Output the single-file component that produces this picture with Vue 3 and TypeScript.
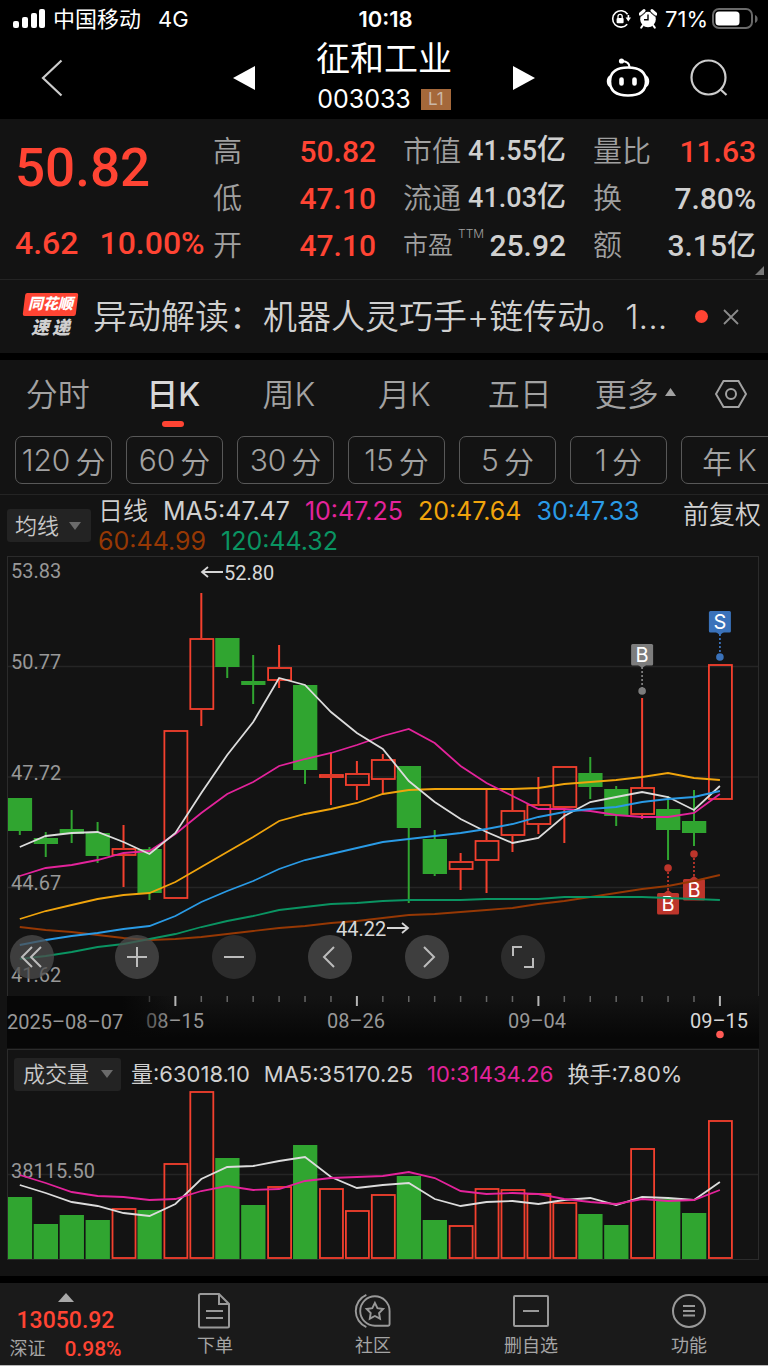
<script setup lang="ts">
import { ref } from 'vue'

type Dir = 'up' | 'down'
type Candle = [Dir, number, number, number, number]

const FIRST_X = 19.8
const STEP = 25.93
const HALF = 12
const cx = (i: number): number => FIRST_X + STEP * i
const line = (ys: number[]): string => ys.map((y, i) => `${cx(i).toFixed(1)},${y}`).join(' ')

// direction, body top, body bottom, high, low
const candles: Candle[] = [
  ['down', 798, 831, 798, 835], ['down', 838, 844, 832, 857], ['down', 829, 834, 810, 843],
  ['down', 833, 856, 822, 863], ['up', 848, 856, 825, 887], ['down', 849, 893, 847, 900],
  ['up', 730, 899, 730, 899], ['up', 638, 710, 593, 726], ['down', 638, 667, 638, 678],
  ['down', 681, 685, 655, 704], ['up', 667, 681, 645, 688], ['down', 685, 770, 685, 784],
  ['up', 774, 778, 753, 805], ['up', 773, 786, 761, 800], ['up', 759, 780, 754, 794],
  ['down', 766, 828, 766, 903], ['down', 839, 874, 830, 876], ['up', 861, 870, 853, 890],
  ['up', 840, 861, 788, 893], ['up', 810, 836, 789, 852], ['up', 804, 825, 777, 834],
  ['up', 766, 808, 766, 843], ['down', 773, 787, 757, 799], ['down', 789, 816, 786, 826],
  ['up', 787, 815, 698, 819], ['down', 809, 830, 796, 860], ['down', 821, 833, 790, 846],
  ['up', 664, 800, 664, 800],
]

const averages: { color: string; ys: number[] }[] = [
  { color: '#963804', ys: [927, 930, 932, 935, 938, 940, 939, 937, 934, 931, 928, 926, 923, 921, 918, 915, 914, 912, 910, 908, 904, 901, 897, 893, 889, 886, 881, 875] },
  { color: '#0a9462', ys: [959, 956, 952, 947, 944, 939, 934, 927, 921, 916, 910, 907, 904, 903, 901, 900, 900, 900, 899, 899, 899, 897, 897, 897, 897, 898, 899, 900] },
  { color: '#f0a40c', ys: [919, 911, 905, 899, 895, 893, 882, 867, 852, 837, 821, 814, 809, 803, 794, 790, 789, 789, 789, 789, 788, 784, 782, 780, 777, 773, 778, 780] },
  { color: '#e3239b', ys: [876, 868, 865, 860, 853, 851, 834, 813, 794, 782, 766, 759, 753, 745, 736, 729, 743, 766, 783, 796, 809, 809, 811, 815, 817, 817, 813, 794] },
  { color: '#dcdcdc', ys: [847, 836, 833, 832, 842, 854, 833, 793, 755, 722, 678, 685, 712, 733, 749, 781, 802, 819, 832, 843, 838, 816, 802, 797, 792, 797, 810, 786] },
  { color: '#2a9be6', ys: [945, 940, 936, 933, 929, 926, 916, 902, 891, 881, 869, 860, 854, 848, 842, 839, 836, 833, 829, 824, 817, 812, 809, 807, 802, 799, 797, 791] },
]

const volumes: [Dir, number][] = [
  ['down', 1197], ['down', 1224], ['down', 1215], ['down', 1220], ['up', 1208], ['down', 1210], ['up', 1163],
  ['up', 1091], ['down', 1158], ['down', 1205], ['up', 1186], ['down', 1145], ['up', 1188], ['up', 1210],
  ['up', 1194], ['down', 1176], ['down', 1220], ['up', 1225], ['up', 1188], ['up', 1189], ['up', 1193],
  ['up', 1202], ['down', 1214], ['down', 1225], ['up', 1148], ['down', 1199], ['down', 1213], ['up', 1120],
]
const volumeMa5 = [1185, 1193, 1202, 1206, 1213, 1216, 1204, 1179, 1167, 1166, 1161, 1157, 1177, 1188, 1185, 1183, 1199, 1206, 1202, 1201, 1204, 1200, 1198, 1205, 1197, 1198, 1200, 1182]
const volumeMa10 = [1175, 1183, 1192, 1196, 1197, 1200, 1199, 1191, 1186, 1190, 1189, 1181, 1178, 1177, 1176, 1172, 1178, 1191, 1194, 1193, 1194, 1199, 1202, 1204, 1199, 1201, 1200, 1190]

const ticks = Array.from({ length: 23 }, (_, k) => ({ x: cx(k + 5), major: (k - 1) % 7 === 0 }))

const markers = [
  { i: 24, label: 'B', top: 644, dot: 691, below: false, color: '#7d7d7d' },
  { i: 27, label: 'S', top: 611, dot: 657, below: false, color: '#3a72ba' },
  { i: 25, label: 'B', top: 893, dot: 868, below: true, color: '#bd352b' },
  { i: 26, label: 'B', top: 879, dot: 854, below: true, color: '#bd352b' },
]

const tabs = ['分时', '日K', '周K', '月K', '五日']
const activeTab = ref('日K')
const periods = [['120', '分'], ['60', '分'], ['30', '分'], ['15', '分'], ['5', '分'], ['1', '分'], ['年', 'K']]
</script>

<template>
  <main class="app">
    <header class="top">
      <div class="status">
        <div class="status-left">
          <svg width="32" height="20" viewBox="0 0 32 20" fill="#fff" aria-hidden="true">
            <rect x="0" y="12" width="6" height="7" rx="2" /><rect x="9" y="8" width="6" height="11" rx="2" />
            <rect x="18" y="4" width="6" height="15" rx="2" /><rect x="26" y="0" width="6" height="19" rx="2" />
          </svg>
          <span class="carrier">中国移动</span><span class="net">4G</span>
        </div>
        <strong class="clock">10:18</strong>
        <div class="status-right">
          <svg width="20" height="20" viewBox="0 0 20 20" fill="none" stroke="#fff" stroke-width="1.6" aria-hidden="true">
            <path d="M16.6 5.2A8.2 8.2 0 1 0 16.2 15.2" /><path d="M17.4 6v4" />
            <path d="M14.6 8.6h5.4l-2.7 4z" fill="#fff" stroke="none" />
            <rect x="5.6" y="9" width="7" height="5.2" rx="1" fill="#fff" stroke="none" />
            <path d="M7 9.2V7.4a2.1 2.1 0 0 1 4.2 0v1.8" stroke-width="1.3" />
          </svg>
          <svg width="18" height="20" viewBox="0 0 18 20" aria-hidden="true">
            <circle cx="9" cy="10.5" r="7.8" fill="#fff" />
            <path d="M1 5.2 5 1.6M17 5.2 13 1.6" stroke="#fff" stroke-width="3" stroke-linecap="round" />
            <path d="M2.2 7 6.6 3.2M15.8 7 11.4 3.2" stroke="#000" stroke-width="1" />
            <path d="M3.8 16.4 2.2 18.6M14.2 16.4l1.6 2.2" stroke="#fff" stroke-width="2" stroke-linecap="round" />
            <path d="M9 5.6v5.2H5" fill="none" stroke="#000" stroke-width="1.4" />
          </svg>
          <span>71%</span>
          <svg width="46" height="22" viewBox="0 0 46 22" aria-hidden="true">
            <rect x="1" y="1" width="39" height="19" rx="6" fill="none" stroke="#6a6a6a" stroke-width="2" />
            <rect x="3.5" y="3.5" width="24" height="14" rx="3.5" fill="#fff" />
            <path d="M43 7v8c2-.8 2.600-2.400 2.600-4S45 7.800 43 7z" fill="#6a6a6a" />
          </svg>
        </div>
      </div>
      <div class="nav">
        <button class="back" aria-label="返回">
          <svg width="22" height="38" viewBox="0 0 22 38" fill="none" stroke="#ccc" stroke-width="2.200"><path d="M20.500 1.500 2 19l18.500 17.500" /></svg>
        </button>
        <button aria-label="上一只"><svg width="22" height="24" viewBox="0 0 22 24"><path d="M22 0v24L0 12z" fill="#fff" /></svg></button>
        <div class="title">
          <h1>征和工业</h1>
          <div class="code"><span>003033</span><span class="level">L1</span></div>
        </div>
        <button aria-label="下一只"><svg width="22" height="24" viewBox="0 0 22 24"><path d="M0 0v24l22-12z" fill="#fff" /></svg></button>
        <div class="actions">
          <button aria-label="智能助手">
            <svg width="44" height="40" viewBox="0 0 44 40" fill="none" stroke="#fff" stroke-width="2.600">
              <path d="M22 9.500c10 0 18 3.500 18 14s-8 14-18 14-18-3.500-18-14 8-14 18-14z" />
              <path d="M23.500 9c0-4-3-5.500-7.500-6" stroke-width="2.200" /><circle cx="15.500" cy="3" r="2.600" fill="#fff" stroke="none" />
              <path d="M4.500 17c-5 1.500-5 11 0 12.500zM39.500 17c5 1.500 5 11 0 12.500z" fill="#fff" stroke="none" />
              <path d="M15.500 21.500v4M28.500 21.500v4" stroke-width="4.600" stroke-linecap="round" />
            </svg>
          </button>
          <button aria-label="搜索">
            <svg width="38" height="38" viewBox="0 0 38 38" fill="none" stroke="#ccc" stroke-width="2.200"><circle cx="18.500" cy="18.500" r="17" /><path d="m30 30 6.500 6" /></svg>
          </button>
        </div>
      </div>
    </header>

    <section class="quote">
      <div class="price">
        <strong>50.82</strong>
        <div class="change"><span>4.62</span><span>10.00%</span></div>
      </div>
      <dl>
        <div><dt>高</dt><dd class="red">50.82</dd></div>
        <div><dt>低</dt><dd class="red">47.10</dd></div>
        <div><dt>开</dt><dd class="red">47.10</dd></div>
      </dl>
      <dl>
        <div><dt>市值</dt><dd class="compact">41.55<i>亿</i></dd></div>
        <div><dt>流通</dt><dd class="compact">41.03<i>亿</i></dd></div>
        <div><dt class="small">市盈<sup>TTM</sup></dt><dd>25.92</dd></div>
      </dl>
      <dl>
        <div><dt>量比</dt><dd class="red">11.63</dd></div>
        <div><dt>换</dt><dd>7.80%</dd></div>
        <div><dt>额</dt><dd>3.15<i>亿</i></dd></div>
      </dl>
      <svg class="corner" width="9" height="9" viewBox="0 0 9 9" aria-hidden="true"><path d="M9 0v9H0z" fill="#777" /></svg>
    </section>

    <section class="news">
      <div class="brand">
        <span class="brand-top">同花顺</span>
        <span class="brand-bottom"><span>速</span><span>递</span></span>
      </div>
      <a href="#news">异动解读：机器人灵巧手+链传动。1...</a>
      <span class="dot"></span>
      <button aria-label="关闭">
        <svg width="16" height="16" viewBox="0 0 16 16" stroke="#8b8b8b" stroke-width="1.800"><path d="m1 1 14 14M15 1 1 15" /></svg>
      </button>
    </section>

    <nav class="tabs">
      <button v-for="tab in tabs" :key="tab" :class="{ active: tab === activeTab }" @click="activeTab = tab">{{ tab }}</button>
      <button>更多<svg width="11" height="8" viewBox="0 0 11 8"><path d="M5.500 0 11 8H0z" fill="#a2a2a2" /></svg></button>
      <button aria-label="设置">
        <svg width="32" height="28" viewBox="0 0 32 28" fill="none" stroke="#a2a2a2" stroke-width="2"><path d="M8.500 1h15L31 14l-7.500 13h-15L1 14z" /><circle cx="16" cy="14" r="5" /></svg>
      </button>
    </nav>
    <div class="periods">
      <button v-for="p in periods" :key="p[0]"><span>{{ p[0] }}</span><span>{{ p[1] }}</span></button>
    </div>

    <section class="legend">
      <label class="picker"><select aria-label="主图指标"><option>均线</option></select><svg width="12" height="8" viewBox="0 0 12 8"><path d="M0 0h12L6 8z" fill="#6b6b6b" /></svg></label>
      <div class="ma">
        <span class="name">日线</span><span>MA5:47.47</span><span class="c10">10:47.25</span><span class="c20">20:47.64</span><span class="c30">30:47.33</span>
        <span class="c60">60:44.99</span><span class="c120">120:44.32</span>
      </div>
      <button class="adjust">前复权</button>
    </section>

    <section class="kline">
      <svg class="plot" viewBox="8 557 750 439" role="img" aria-label="日K线图">
        <g stroke="#252525" stroke-width="1.500"><path d="M8 666.500h750M8 777h750M8 887.500h750" /></g>
        <g v-for="(c, i) in candles" :key="i" stroke-width="2" :stroke="c[0] === 'up' ? '#f4402e' : '#30a530'">
          <template v-if="c[0] === 'up'">
            <path :d="`M${cx(i)} ${c[3]}V${c[1]}M${cx(i)} ${c[2]}V${c[4]}`" />
            <rect :x="cx(i) - 11" :y="c[1] + 1" width="23" :height="c[2] - c[1] - 2" fill="none" stroke-width="1.800" />
          </template>
          <template v-else>
            <path :d="`M${cx(i)} ${c[3]}V${c[4]}`" />
            <rect :x="cx(i) - HALF" :y="c[1]" width="24.300" :height="c[2] - c[1]" fill="#30a530" stroke="none" />
          </template>
        </g>
        <g class="axis"><text x="11" y="578">53.83</text><text x="11" y="669">50.77</text><text x="11" y="780">47.72</text><text x="11" y="890">44.67</text><text x="11" y="982">41.62</text></g>
        <g v-for="m in markers" :key="m.i">
          <path :d="m.below ? `M${cx(m.i)} ${m.dot + 4}V${m.top - 2}` : `M${cx(m.i)} ${m.top + 23}V${m.dot - 3}`" :stroke="m.color" stroke-width="1.800" stroke-dasharray="2 2" />
          <circle :cx="cx(m.i)" :cy="m.dot" r="3.800" :fill="m.color" />
          <rect :x="cx(m.i) - 11" :y="m.top" width="22" height="21.500" rx="1.500" :fill="m.color" />
          <path :d="m.below ? `M${cx(m.i) - 4} ${m.top}l4-3 4 3z` : `M${cx(m.i) - 4} ${m.top + 21}l4 3 4-3z`" :fill="m.color" />
          <text class="mark" :x="cx(m.i)" :y="m.top + 18" text-anchor="middle">{{ m.label }}</text>
        </g>
        <polyline v-for="a in averages" :key="a.color" :points="line(a.ys)" fill="none" :stroke="a.color" stroke-width="1.800" />
        <g fill="none" stroke="#d5d5d5" stroke-width="1.800"><path d="M223 572h-21m6-5-6 5 6 5M387 928h21m-6-5 6 5-6 5" /></g>
        <g class="extreme"><text x="224" y="580">52.80</text><text x="336" y="936">44.22</text></g>
      </svg>
      <div class="tools">
        <button aria-label="收起"><svg viewBox="0 0 44 44"><path d="M31 12 21 22l10 10M22 12 12 22l10 10" /></svg></button>
        <div class="tool-group">
          <button aria-label="放大"><svg viewBox="0 0 44 44"><path d="M12 22h20M22 12v20" /></svg></button>
          <button class="dim" aria-label="缩小"><svg viewBox="0 0 44 44"><path d="M12 22h20" /></svg></button>
          <button aria-label="左移"><svg viewBox="0 0 44 44"><path d="M26 12 16 22l10 10" /></svg></button>
          <button aria-label="右移"><svg viewBox="0 0 44 44"><path d="m19 12 10 10-10 10" /></svg></button>
          <button class="dim" aria-label="全屏"><svg viewBox="0 0 44 44"><path d="M12 21v-9h9M23 32h9v-9" /></svg></button>
        </div>
      </div>
    </section>
    <svg class="dates" viewBox="7 996 752 52" role="img" aria-label="日期轴">
      <defs>
        <linearGradient id="band" x1="0" y1="0" x2="0" y2="1"><stop offset="0" stop-color="#131313" /><stop offset="0.800" stop-color="#070707" /></linearGradient>
        <linearGradient id="fade" x1="0" y1="0" x2="1" y2="0"><stop offset="0.700" stop-color="#070707" /><stop offset="1" stop-color="#070707" stop-opacity="0" /></linearGradient>
      </defs>
      <rect x="7" y="996" width="752" height="52" fill="url(#band)" />
      <path v-for="t in ticks" :key="t.x" :d="`M${t.x} 996v${t.major ? 10 : 6}`" :stroke="t.major ? '#b5b5b5' : '#666'" :stroke-width="t.major ? 2 : 1.5" />
      <g class="axis"><text x="146" y="1028">08–15</text><text x="327" y="1028">08–26</text><text x="508" y="1028">09–04</text></g>
      <text class="axis now" x="690" y="1028">09–15</text>
      <rect x="7" y="996" width="165" height="52" fill="url(#fade)" />
      <text class="axis" x="7" y="1029">2025–08–07</text>
      <circle cx="720" cy="1034.500" r="3.800" fill="#ff5a55" />
    </svg>

    <section class="volume">
      <div class="volume-head">
        <label class="picker wide"><select aria-label="副图指标"><option>成交量</option></select><svg width="12" height="8" viewBox="0 0 12 8"><path d="M0 0h12L6 8z" fill="#6b6b6b" /></svg></label>
        <div class="volume-values"><span>量:63018.10</span><span>MA5:35170.25</span><span class="c10">10:31434.26</span><span>换手:7.80%</span></div>
      </div>
      <svg class="plot" viewBox="8 1090 750 169" role="img" aria-label="成交量图">
        <path d="M8 1174.500h750" stroke="#252525" stroke-width="1.500" />
        <template v-for="(v, i) in volumes" :key="i">
          <rect v-if="v[0] === 'up'" :x="cx(i) - 11" :y="v[1] + 1" width="23" :height="1257 - v[1]" fill="none" stroke="#f4402e" stroke-width="1.800" />
          <rect v-else :x="cx(i) - HALF" :y="v[1]" width="24.300" :height="1259 - v[1]" fill="#30a530" />
        </template>
        <text class="axis" x="11" y="1178">38115.50</text>
        <polyline :points="line(volumeMa5)" fill="none" stroke="#dcdcdc" stroke-width="1.800" />
        <polyline :points="line(volumeMa10)" fill="none" stroke="#e3239b" stroke-width="1.800" />
      </svg>
    </section>

    <nav class="bottom">
      <a href="#index" class="index">
        <svg width="16" height="9" viewBox="0 0 16 9"><path d="M8 0l8 9H0z" fill="#a8a8a8" /></svg>
        <strong>13050.92</strong>
        <span><em>深证</em><b>0.98%</b></span>
      </a>
      <button>
        <svg width="36" height="36" viewBox="0 0 36 36"><path d="M4 1h18l10 10v22a1.500 1.500 0 0 1-1.500 1.500h-27A1.500 1.500 0 0 1 2 33V2.500A1.500 1.500 0 0 1 3.500 1zM22 1v10h10M9 18h17M9 25h17" /></svg>
        下单
      </button>
      <button>
        <svg width="40" height="38" viewBox="0 0 40 38"><path d="M36 34.500H22A15.500 15.500 0 1 1 37.500 19v14a1.500 1.500 0 0 1-1.500 1.500zM13 2a18.500 18.500 0 0 0 0 34" /><path d="m22 10.500 2.700 5.500 6 .9-4.300 4.200 1 6-5.400-2.800-5.400 2.800 1-6-4.300-4.200 6-.9z" /></svg>
        社区
      </button>
      <button>
        <svg width="36" height="36" viewBox="0 0 36 36"><rect x="1" y="3" width="34" height="30" rx="1" /><path d="M10 18h16" /></svg>
        删自选
      </button>
      <button>
        <svg width="36" height="36" viewBox="0 0 36 36"><circle cx="18" cy="18" r="16" /><path d="M12 13h12M12 18h12M12 22.500h12" /></svg>
        功能
      </button>
    </nav>
  </main>
</template>

<style>
body { margin: 0; background: #131313; }
</style>

<style scoped>
.app { color: #d0d0d0; background: #131313; font-family: Inter, "Noto Sans CJK SC", sans-serif; font-size: 24px; min-width: 0; overflow: hidden; }
.app * { box-sizing: border-box; }
button { padding: 0; border: 0; background: none; color: inherit; font: inherit; white-space: nowrap; }
a { color: inherit; text-decoration: none; }
svg { display: block; flex: none; }

.top { height: 119px; background: #000; color: #fff; }
.status { display: grid; grid-template-columns: 1fr auto 1fr; align-items: center; height: 38px; padding: 0 10px 0 13px; font-size: 22px; line-height: 38px; }
.status-left, .status-right { display: flex; align-items: center; }
.carrier { margin-left: 8px; }
.net { margin-left: 17px; }
.clock { font-weight: 600; }
.status-right { justify-content: flex-end; gap: 8px; }
.status-right span { margin-right: -4px; }
.nav { display: grid; grid-template-columns: 1fr 22px 258px 22px 1fr; align-items: center; height: 80px; }
.back { justify-self: start; margin-left: 41px; }
.title { text-align: center; }
h1 { margin: 0; font-size: 34px; line-height: 42px; font-weight: 400; }
.code { display: flex; align-items: center; justify-content: center; gap: 10px; font-size: 25px; line-height: 38px; }
.level { width: 30px; height: 21px; background: #a5683a; color: #cbb8a8; font-size: 17px; line-height: 21px; }
.actions { display: flex; align-items: center; justify-content: flex-end; gap: 40px; padding-right: 40px; }

.quote { position: relative; display: grid; grid-template-columns: 186px repeat(3, 1fr); column-gap: 27px; height: 161px; padding: 9px 12px 0 0; border-bottom: 1px solid #242424; font-family: "Liberation Sans Narrow", Roboto, "Noto Sans CJK SC", sans-serif; }
.price { padding-left: 15px; color: #ff4433; white-space: nowrap; }
.price strong { display: block; font-size: 53px; line-height: 80px; font-weight: 500; }
.change { display: flex; gap: 21px; font-size: 32px; line-height: 70px; font-weight: 500; }
dl { margin: 0; }
dl div { display: flex; justify-content: space-between; height: 47px; line-height: 47px; white-space: nowrap; }
dt { color: #a0a0a0; font-size: 29px; line-height: 48px; font-weight: 350; }
dt.small { font-size: 25px; }
sup { margin-left: 5px; font-family: Inter, sans-serif; font-size: 12px; line-height: 0; vertical-align: 16px; }
dd { margin: 0; font-size: 30px; font-weight: 500; }
dd.compact { font-size: 27px; }
dd i { font-size: 29px; font-style: normal; line-height: 0; }
.red { color: #ff4433; }
.corner { position: absolute; right: 4px; bottom: 4px; }

.news { display: flex; align-items: center; height: 80px; padding: 0 29px 0 23px; border-bottom: 7px solid #000; font-weight: 350; }
.brand { display: grid; justify-items: center; width: 55px; font-weight: 900; font-style: italic; }
.brand-top { position: relative; z-index: 0; width: 53px; height: 23px; color: #fff; font-size: 15px; line-height: 22px; text-align: center; }
.brand-top::before { content: ""; position: absolute; inset: 0; z-index: -1; border-radius: 2px; background: #ff4433; transform: skewX(-7deg); }
.brand-bottom { display: flex; gap: 3px; font-size: 18px; line-height: 24px; color: #d0d0d0; }
.news a { flex: 1; min-width: 0; margin-left: 15px; padding-bottom: 4px; overflow: hidden; font-size: 34px; white-space: nowrap; }
.dot { flex: none; width: 13px; height: 13px; margin-right: 15px; border-radius: 50%; background: #ff4433; }

.tabs { display: grid; grid-template-columns: repeat(6, 1fr) 75px; height: 76px; color: #a2a2a2; font-size: 32px; font-weight: 350; }
.tabs button { position: relative; display: flex; align-items: center; justify-content: center; gap: 6px; height: 64px; }
.tabs button:last-child { height: 68px; }
.tabs .active { color: #d8d8d8; font-weight: 500; }
.tabs .active::after { content: ""; position: absolute; bottom: -3px; width: 22px; height: 6px; border-radius: 3px; background: #ff4433; }
.periods { display: flex; gap: 14px; height: 59px; padding-left: 15px; overflow: hidden; border-bottom: 1px solid #242424; }
.periods button { display: flex; flex: none; align-items: center; justify-content: center; gap: 5px; width: 97px; height: 48px; border: 1px solid #585858; border-radius: 7px; color: #a2a2a2; font-size: 30px; font-weight: 350; }

.legend { display: flex; align-items: flex-start; height: 61px; padding: 1px 7px 0; }
.picker { position: relative; display: flex; align-items: center; flex: none; width: 84px; height: 33px; border-radius: 3px; background: #232323; }
.picker svg { position: absolute; right: 10px; pointer-events: none; }
.picker select { width: 100%; height: 33px; padding: 0 0 0 8px; border: 0; background: none; color: #c8c8c8; appearance: none; font: inherit; font-size: 22px; font-weight: 350; }
.legend .picker { margin-top: 13px; }
.ma { display: flex; flex: 1; flex-wrap: wrap; column-gap: 15px; margin-left: 7px; line-height: 30px; font-size: 25px; font-weight: 400; white-space: nowrap; }
.ma .name { font-weight: 350; }
.c10 { color: #e3239b; }
.c20 { color: #f0a40c; }
.c30 { color: #2a9be6; }
.c60 { color: #963804; }
.c120 { color: #0a9462; }
.adjust { font-size: 26px; line-height: 38px; font-weight: 350; }

.kline { position: relative; margin: 0 9px 0 7px; border: 1px solid #2b2b2b; border-bottom: 0; }
.plot { width: 100%; height: auto; }
.axis { fill: #989898; font-family: "Liberation Sans Narrow", Roboto, sans-serif; font-size: 20px; }
.axis.now { fill: #d8d8d8; }
.extreme { fill: #d8d8d8; font-family: "Liberation Sans Narrow", Roboto, sans-serif; font-size: 20px; }
.mark { fill: #fff; font-family: Inter, sans-serif; font-size: 20px; }
.tools { position: absolute; left: 2px; bottom: 17px; display: flex; gap: 61px; }
.tool-group { display: flex; justify-content: space-between; width: 430px; }
.tools button { width: 44px; height: 44px; border-radius: 50%; background: rgba(78, 78, 78, 0.75); }
.tools .dim { background: rgba(54, 54, 54, 0.75); }
.tools svg { width: 44px; height: 44px; fill: none; stroke: #bcbcbc; stroke-width: 2; }
.dates { width: calc(100% - 16px); height: auto; margin: 0 9px 0 7px; }

.volume { margin: 1px 9px 0 7px; border: 1px solid #2b2b2b; }
.volume-head { display: flex; align-items: center; gap: 10px; height: 40px; padding: 8px 0 0 6px; font-size: 22px; white-space: nowrap; }
.volume-values { display: flex; gap: 14px; height: 36px; line-height: 36px; font-weight: 400; }
.picker.wide { width: 107px; }
.volume .picker select { padding-left: 9px; }
.picker.wide svg { right: 8px; }

.bottom { display: grid; grid-template-columns: 136px repeat(4, 1fr); height: 90px; margin-top: 16px; border-top: 7px solid #000; border-bottom: 1px solid #b8b8b8; background: #1a1a1a; color: #a5a5a5; }
.bottom button { display: flex; flex-direction: column; align-items: center; gap: 4px; padding-top: 10px; font-size: 18px; line-height: 26px; }
.bottom button svg { height: 36px; fill: none; stroke: #999; stroke-width: 2; }
.index { display: flex; flex-direction: column; align-items: center; padding: 10px 5px 0 0; }
.index strong { color: #ff4433; font: 500 23px/30px "Liberation Sans Narrow", Roboto, sans-serif; margin-top: 4px; }
.index span { display: flex; gap: 19px; font-size: 18px; line-height: 26px; }
.index em { font-style: normal; }
.index b { color: #ff4433; font: 500 21px/26px "Liberation Sans Narrow", Roboto, sans-serif; }
</style>
